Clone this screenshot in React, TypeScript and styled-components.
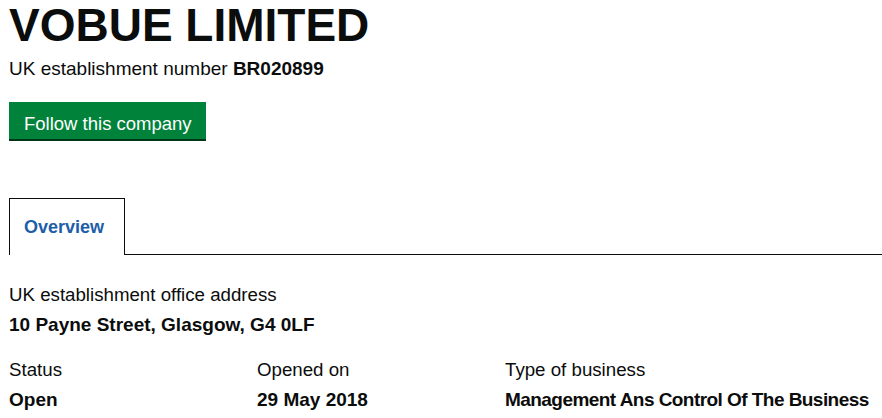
import React from "react";
import styled, { createGlobalStyle } from "styled-components";

const GlobalStyle = createGlobalStyle`
  html, body {
    margin: 0;
    padding: 0;
    background: #ffffff;
  }
  body {
    font-family: "Liberation Sans", Arial, sans-serif;
    color: #0b0c0c;
  }
`;

const Page = styled.main`
  padding-left: 9px;
  display: flex;
  flex-direction: column;
`;

const Title = styled.h1`
  margin: 2px 0 0;
  font-size: 46px;
  line-height: 46px;
  font-weight: 700;
  color: #0b0c0c;
`;

const Subtitle = styled.p`
  margin: 8px 0 0;
  font-size: 19px;
  line-height: 25px;
  color: #0b0c0c;
`;

const Strong = styled.strong`
  font-weight: 700;
`;

const FollowButton = styled.button`
  margin-top: 21px;
  align-self: flex-start;
  border: 0;
  border-radius: 0;
  background: #00823b;
  color: #ffffff;
  font-family: "Liberation Sans", Arial, sans-serif;
  font-size: 18.5px;
  line-height: 19px;
  padding: 12px 14px 6px 15px;
  height: 37px;
  box-shadow: 0 2px 0 #003618;
  cursor: pointer;
`;

const TabList = styled.div`
  margin-top: 59px;
  display: flex;
  border-bottom: 1px solid #0b0c0c;
`;

const Tab = styled.div`
  border: 1px solid #0b0c0c;
  border-bottom: 0;
  margin-bottom: -1px;
  background: #ffffff;
  padding: 16px 20px 16px 14px;
  font-size: 18px;
  line-height: 24px;
  font-weight: 700;
  color: #1d5ea8;
`;

const Field = styled.div`
  display: flex;
  flex-direction: column;
  gap: 5px;
`;

const Label = styled.div`
  font-size: 18.7px;
  line-height: 25px;
  color: #0b0c0c;
  white-space: nowrap;
`;

const Value = styled.div<{ $tight?: boolean }>`
  font-size: 19px;
  line-height: 25px;
  font-weight: 700;
  color: #0b0c0c;
  white-space: nowrap;
  letter-spacing: ${(p) => (p.$tight ? "-0.55px" : "0")};
`;

const Address = styled(Field)`
  margin-top: 27px;
`;

const Columns = styled.div`
  margin-top: 20px;
  display: grid;
  grid-template-columns: 248px 248px 1fr;
`;

export default function App() {
  return (
    <>
      <GlobalStyle />
      <Page>
        <Title>VOBUE LIMITED</Title>
        <Subtitle>
          UK establishment number <Strong>BR020899</Strong>
        </Subtitle>
        <FollowButton>Follow this company</FollowButton>
        <TabList>
          <Tab>Overview</Tab>
        </TabList>
        <Address>
          <Label>UK establishment office address</Label>
          <Value>10 Payne Street, Glasgow, G4 0LF</Value>
        </Address>
        <Columns>
          <Field>
            <Label>Status</Label>
            <Value>Open</Value>
          </Field>
          <Field>
            <Label>Opened on</Label>
            <Value>29 May 2018</Value>
          </Field>
          <Field>
            <Label>Type of business</Label>
            <Value $tight>Management Ans Control Of The Business</Value>
          </Field>
        </Columns>
      </Page>
    </>
  );
}
